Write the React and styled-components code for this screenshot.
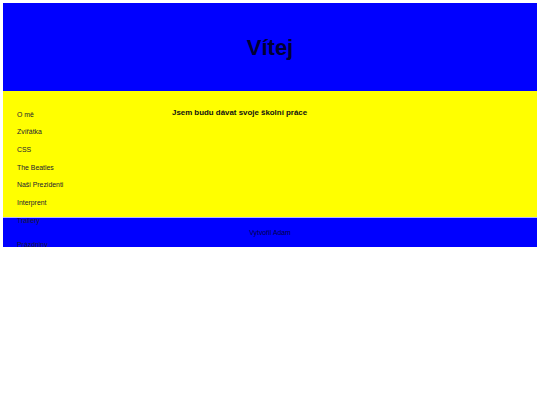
import React from "react";
import styled, { createGlobalStyle } from "styled-components";

const GlobalStyle = createGlobalStyle`
  body {
    margin: 3px;
    background: #ffffff;
    font-family: "Liberation Sans", Arial, sans-serif;
    color: #000;
  }
`;

const Header = styled.header`
  height: 88px;
  background: #0000ff;
  box-shadow: 0 0 0 1px #b4b4ff;
  display: flex;
  align-items: center;
  justify-content: center;
`;

const Title = styled.h1`
  margin: 2px 0 0;
  font-size: 22px;
  font-weight: 700;
  color: #000033;
`;

const Main = styled.main`
  height: 127px;
  background: #ffff00;
  display: grid;
  grid-template-columns: 155px 1fr;
  padding-left: 14px;
`;

const Nav = styled.ul`
  list-style: none;
  margin: 0;
  padding: 14.5px 0 0;
`;

const NavItem = styled.li`
  font-size: 6.9px;
  line-height: 17.7px;
  color: #1a1a33;
  margin-top: ${(p) => (p.$gap ? "7px" : "0")};
`;

const Content = styled.section`
  padding-top: 16.5px;
`;

const Heading = styled.h2`
  margin: 0;
  font-size: 7.9px;
  line-height: 9px;
  font-weight: 700;
  color: #111;
`;

const Footer = styled.footer`
  height: 29px;
  background: #0000ff;
  box-shadow: 0 0 0 1px #b4b4ff;
  display: flex;
  align-items: center;
  justify-content: center;
  font-size: 6.8px;
  color: #000044;
`;

const links = [
  "O mě",
  "Zvířátka",
  "CSS",
  "The Beatles",
  "Naši Prezidenti",
  "Interprent",
  "Trailery",
];

export default function App() {
  return (
    <>
      <GlobalStyle />
      <Header>
        <Title>Vítej</Title>
      </Header>
      <Main>
        <Nav>
          {links.map((l) => (
            <NavItem key={l}>{l}</NavItem>
          ))}
          <NavItem $gap>Prázdniny</NavItem>
        </Nav>
        <Content>
          <Heading>Jsem budu dávat svoje školní práce</Heading>
        </Content>
      </Main>
      <Footer>Vytvořil Adam</Footer>
    </>
  );
}
